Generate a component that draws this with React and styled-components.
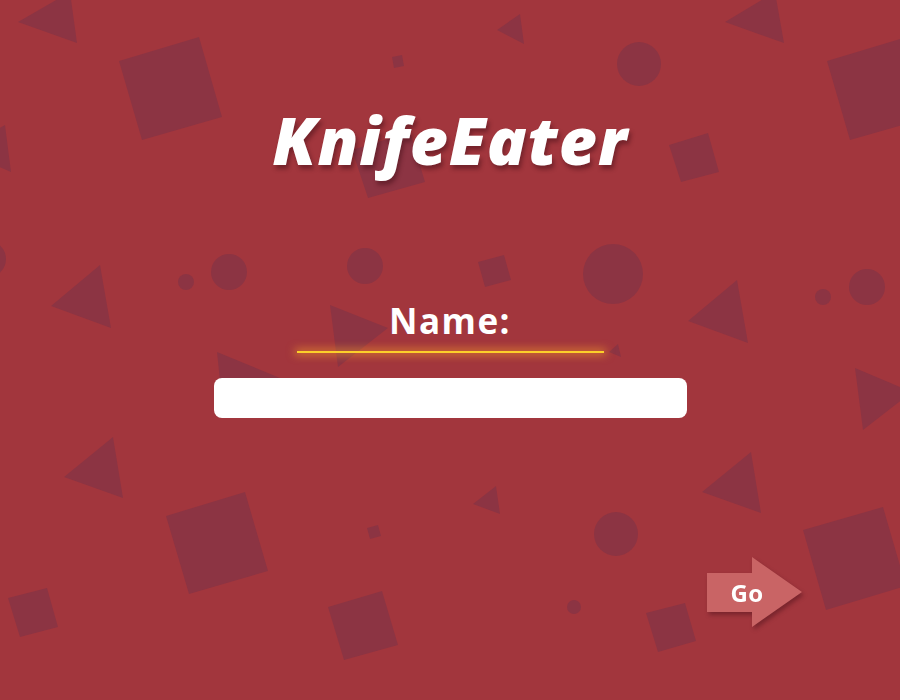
import React, { useState } from 'react';
import styled, { createGlobalStyle } from 'styled-components';

const polygons = [
  // top row
  '18,22 70,-8 77,43',
  '119,61 199,37 222,117 142,140',
  '-40,150 5,125 11,172',
  '392,57 402,55 404,66 394,68',
  '497,30 520,14 524,44',
  '352,150 410,132 425,182 368,198',
  '725,22 775,-8 784,43',
  '827,61 907,37 930,117 850,140',
  '669,145 708,133 719,172 681,182',
  // middle row
  '51,306 100,265 111,328',
  '330,305 388,328 338,367',
  '217,352 280,378 222,400',
  '478,262 504,255 511,280 485,287',
  '688,321 737,280 748,343',
  '855,368 912,392 863,430',
  '609,352 618,344 621,357',
  // bottom row
  '64,477 113,437 123,498',
  '166,516 245,492 268,571 189,594',
  '8,598 47,588 58,627 20,637',
  '367,528 378,525 381,536 370,539',
  '473,504 496,486 500,514',
  '328,607 382,591 398,645 344,660',
  '702,492 751,452 761,513',
  '803,530 883,507 906,586 826,610',
  '646,613 685,603 696,641 658,652',
];

const circles = [
  [639, 64, 22],
  [-12, 259, 18],
  [186, 282, 8],
  [229, 272, 18],
  [365, 266, 18],
  [613, 274, 30],
  [823, 297, 8],
  [867, 287, 18],
  [616, 534, 22],
  [574, 607, 7],
];

const Start = () => {
  const [name, setName] = useState('');

  return (
    <Page>
      <GlobalStyle />
      <Shapes width="900" height="700" viewBox="0 0 900 700">
        {polygons.map((points) => (
          <polygon key={points} points={points} />
        ))}
        {circles.map(([cx, cy, r]) => (
          <circle key={`${cx}-${cy}`} cx={cx} cy={cy} r={r} />
        ))}
      </Shapes>

      <Content>
        <Title>KnifeEater</Title>

        <Label htmlFor="name">Name:</Label>
        <Glow />

        <NameInput
          id="name"
          value={name}
          onChange={(e) => setName(e.target.value)}
        />

        <Footer>
          <ArrowShadow>
            <GoButton>Go</GoButton>
          </ArrowShadow>
        </Footer>
      </Content>
    </Page>
  );
};

export default Start;

const GlobalStyle = createGlobalStyle`
  html, body {
    margin: 0;
    padding: 0;
    background: #a2363d;
  }

  body {
    font-family: "Open Sans", "Liberation Sans", sans-serif;
  }
`;

const Page = styled.div`
  position: relative;
  width: 100%;
  height: 100vh;
  overflow: hidden;
  background: #a2363d;
`;

const Shapes = styled.svg`
  position: absolute;
  top: 0;
  left: 0;
  fill: #8c3443;
`;

const Content = styled.div`
  position: relative;
  display: flex;
  flex-direction: column;
  align-items: center;
  padding-top: 99px;
`;

const Title = styled.h1`
  margin: 0;
  font-size: 66px;
  line-height: 80px;
  font-weight: 800;
  font-style: italic;
  color: white;
  letter-spacing: 0.9px;
  text-shadow: 2px 4px 4px rgba(60, 10, 20, 0.45);
`;

const Label = styled.label`
  margin-top: 122px;
  font-size: 35px;
  line-height: 40px;
  font-weight: 700;
  color: white;
  letter-spacing: 1.5px;
`;

const Glow = styled.div`
  width: 307px;
  height: 2px;
  margin-top: 10px;
  background: #fcd02a;
  box-shadow: 0 0 9px 2px rgba(255, 170, 40, 0.6);
`;

const NameInput = styled.input`
  box-sizing: border-box;
  width: 473px;
  height: 40px;
  margin-top: 25px;
  padding: 0 12px;
  border: none;
  border-radius: 8px;
  background: white;
  font-family: "Open Sans", sans-serif;
  font-size: 18px;
  outline: none;
`;

const Footer = styled.div`
  align-self: stretch;
  display: flex;
  justify-content: flex-end;
  padding-right: 98px;
  margin-top: 139px;
`;

const ArrowShadow = styled.div`
  filter: drop-shadow(2px 3px 2px rgba(60, 10, 20, 0.4));
`;

const GoButton = styled.button`
  width: 95px;
  height: 70px;
  padding: 0 15px 0 0;
  border: none;
  background: #c96465;
  color: white;
  font-family: "Open Sans", sans-serif;
  font-size: 24px;
  font-weight: 700;
  letter-spacing: 0.5px;
  cursor: pointer;
  clip-path: polygon(
    0 16px,
    45px 16px,
    45px 0,
    95px 35px,
    45px 70px,
    45px 55px,
    0 55px
  );
`;
